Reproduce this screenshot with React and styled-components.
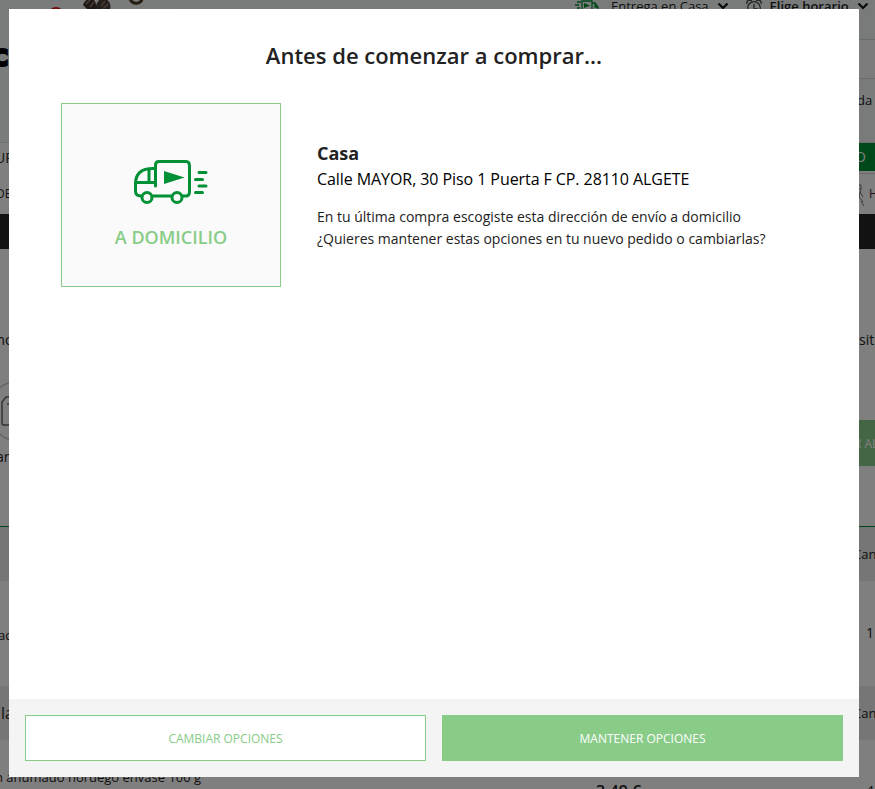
import React from "react";
import styled, { createGlobalStyle } from "styled-components";

const GlobalStyle = createGlobalStyle`
  * { box-sizing: border-box; }
  html, body { margin: 0; height: 100%; overflow: hidden; }
  body { font-family: "Open Sans", "Noto Sans", sans-serif; color: #222; background: #fff; }
`;

const Page = styled.div`
  width: 875px;
  height: 789px;
  overflow: hidden;
`;

const Header = styled.header`
  height: 142px;
  background: linear-gradient(90deg, #f4f7f7, #f3f7f6);
`;

const TopBar = styled.div`
  display: flex;
  align-items: flex-start;
  height: 39px;
  padding-left: 45px;
`;

const Decoration = styled.svg`
  display: block;
  flex: none;
  width: 110px;
  height: 12px;
  margin-right: 420px;
`;

const TopItem = styled.div`
  display: flex;
  align-items: center;
  flex: none;
  height: 12px;
  margin-left: ${(p) => p.$gap || 0}px;
  white-space: nowrap;
  font-size: 13px;
  font-weight: ${(p) => (p.$strong ? 600 : 400)};
  svg { flex: none; }
`;

const TopText = styled.span`
  margin: 0 ${(p) => p.$after || 8}px 0 ${(p) => p.$before || 9}px;
`;

const Row = styled.section`
  display: grid;
  grid-template-columns: 859px 16px;
  align-items: start;
  height: ${(p) => p.$height}px;
  background: ${(p) => p.$bg || "transparent"};
  border-top: ${(p) => (p.$line ? `1px solid ${p.$line}` : "0")};
  overflow: hidden;
`;

const SearchEdge = styled.div`
  width: 16px;
  height: 40px;
  border: solid #d0d6d6;
  border-width: 1px 0;
  background: #f8f8f8;
`;

const Label = styled.div`
  margin: ${(p) => p.$top || 0}px 0 0 ${(p) => p.$left || 0}px;
  font-size: ${(p) => p.$size || 14}px;
  font-weight: ${(p) => p.$weight || 400};
  line-height: 20px;
  color: ${(p) => p.$color || "#222"};
  white-space: nowrap;
`;

const Brand = styled(Label)`
  font-family: "DejaVu Sans", sans-serif;
  color: #000;
  -webkit-text-stroke: 2px #000;
`;

const GreenBlock = styled.div`
  display: flex;
  align-items: center;
  width: 60px;
  height: ${(p) => p.$height}px;
  margin-top: ${(p) => p.$top || 0}px;
  background: ${(p) => p.$bg};
`;

const Branch = styled.svg`
  display: block;
  flex: none;
  width: 16px;
  height: 38px;
`;

const NavRight = styled.div`
  display: flex;
  width: 30px;
  border-top: 1px solid #d0d0d0;
`;

const ListBadge = styled.svg`
  display: block;
  width: 80px;
  height: 60px;
  margin-top: 29px;
`;

const Overlay = styled.div`
  position: fixed;
  inset: 0;
  padding: 9px 0 0 9px;
  background: rgba(0, 0, 0, 0.5);
`;

const Dialog = styled.main`
  display: flex;
  flex-direction: column;
  width: 850px;
  height: 768px;
  background: #fff;
`;

const Title = styled.h1`
  margin: 30px 0 0;
  font-size: 22px;
  font-weight: 600;
  line-height: 32px;
  text-align: center;
  color: #222;
`;

const Content = styled.div`
  display: flex;
  flex: 1;
  align-items: flex-start;
  gap: 36px;
  padding: 32px 52px 0;
`;

const MethodCard = styled.div`
  display: flex;
  flex-direction: column;
  align-items: center;
  flex: none;
  width: 220px;
  height: 184px;
  padding-top: 53px;
  background: #fafafa;
  border: 1px solid #8c8;
`;

const MethodName = styled.div`
  margin-top: 21px;
  font-size: 18px;
  font-weight: 600;
  line-height: 24px;
  color: #8c8;
`;

const Details = styled.div`
  padding-top: 38px;
  white-space: nowrap;
`;

const Place = styled.h2`
  margin: 0;
  font-size: 18px;
  font-weight: 700;
  line-height: 25px;
`;

const Address = styled.p`
  margin: 0 0 14px;
  font-size: 16px;
  line-height: 26px;
  letter-spacing: -0.075px;
  color: #000;
`;

const Question = styled.p`
  margin: 0;
  font-size: 14px;
  line-height: 22px;
`;

const Footer = styled.footer`
  display: flex;
  gap: 16px;
  height: 78px;
  padding: 16px;
  background: #f4f4f4;
`;

const Button = styled.button`
  flex: 1;
  height: 46px;
  padding: 0;
  border: 1px solid #8c8;
  background: ${(p) => (p.$filled ? "#8c8" : "#fff")};
  color: ${(p) => (p.$filled ? "#fff" : "#8c8")};
  font: 400 12px "Open Sans", sans-serif;
`;

const Chevron = () => (
  <svg width="12" height="8" viewBox="0 0 12 8">
    <path d="M1.500 1.500 6 6l4.500-4.500" fill="none" stroke="#111" strokeWidth="2.200" />
  </svg>
);

const MiniTruck = () => (
  <svg width="24" height="12" viewBox="0 0 24 12" fill="none" stroke="#009035" strokeWidth="1.300">
    <path d="M7 12V1h10v11M17 3h3l3 4v5M2 2h4M0 5h4M2 8h3M20 3v4h3" />
    <path d="m9 3 6 2.500L9 8z" fill="#009035" stroke="none" />
  </svg>
);

const Alarm = () => (
  <svg width="16" height="17" viewBox="0 0 16 17" fill="none" stroke="#444" strokeWidth="1.300">
    <circle cx="8" cy="10" r="6.300" />
    <path d="M8 6v5h4M1 6c-1-3 2-5 5-3M15 6c1-3-2-5-5-3" />
  </svg>
);

const Truck = () => (
  <svg width="76" height="47" viewBox="0 0 76 47" fill="none" stroke="#009035" strokeWidth="3" strokeLinecap="round" strokeLinejoin="round">
    <path d="M22.500 29V8Q22.500 4.500 26 4.500H53Q56.500 4.500 56.500 9V34.500Q56.500 39 53 39H50M38 39H20M8 39Q2.500 39 2.500 34V26Q3 11.500 20 11.500H22" />
    <path d="M3 25.500H22M16 13V25" />
    <circle cx="14" cy="40.500" r="5" />
    <circle cx="44" cy="40.500" r="5" />
    <path d="m31 14 20.500 6.500L31 27z" fill="#009035" stroke="none" />
    <path d="M66 15.500H73M62.500 22.500H69.500M66 29H73M62.500 35.500H69.500" />
  </svg>
);

export default function App() {
  return (
    <>
      <GlobalStyle />
      <Page>
        <Header>
          <TopBar>
            <Decoration viewBox="0 0 110 12">
              <circle cx="11" cy="15" r="8" fill="#ed1522" />
              <path d="M38 5q2-6 7-6 7 0 6 10h-9z" fill="#40352f" />
              <path d="M51 9q-1-5 4-10h6q6 4 4 10z" fill="#4a403c" />
              <path d="m41 4 4-4m0 7 4-5m7 4 4-5m-2 8 5-5" stroke="#93796a" strokeWidth="1.500" />
              <path d="M85-1q2 5 8 4 4-1 4-5" fill="none" stroke="#4a3a22" strokeWidth="3" />
            </Decoration>
            <TopItem>
              <MiniTruck />
              <TopText $before={12}>Entrega en Casa</TopText>
              <Chevron />
            </TopItem>
            <TopItem $gap={17} $strong>
              <Alarm />
              <TopText $before={8}>Elige horario</TopText>
              <Chevron />
            </TopItem>
          </TopBar>
          <Row $height={40}>
            <Brand $size={30} $weight={700} $top={7} $left={-9}>c</Brand>
            <SearchEdge />
          </Row>
          <Row $height={63}>
            <span />
            <Label $top={11} $left={-2} $size={13}>da</Label>
          </Row>
        </Header>
        <Row $height={31} $line="#ddd">
          <Label $top={5} $left={-5}>UR</Label>
          <GreenBlock $height={28} $bg="#009035">
            <Label $left={-4} $color="#fff">O</Label>
          </GreenBlock>
        </Row>
        <Row $height={41}>
          <Label $top={11} $left={-4} $size={12}>DE</Label>
          <NavRight>
            <Branch viewBox="0 0 16 38" fill="none" stroke="#777" strokeWidth="1">
              <path d="M0 11h2v4H0M2 15l-2 8M1 18l3 5M0 23l4 5M2 27l3 5" />
            </Branch>
            <Label $top={10} $left={-6} $size={12} $color="#55202a">H</Label>
          </NavRight>
        </Row>
        <Row $height={35} $bg="#252525" />
        <Row $height={102}>
          <Label $top={81} $left={-8}>mo</Label>
          <Label $top={81}>sitio</Label>
        </Row>
        <Row $height={175}>
          <div>
            <ListBadge viewBox="0 0 80 60" fill="none" stroke="#666" strokeWidth="2">
              <circle cx="19" cy="31" r="30" stroke="#ccc" strokeWidth="1.500" />
              <path d="M2 44V22l4-5h16v28H3zM7 24h5v-5M9 28h1M9 33h1M9 38h1" strokeWidth="1.500" />
            </ListBadge>
            <Label $top={7} $left={-4}>ar</Label>
          </div>
          <GreenBlock $height={46} $bg="#8c8" $top={69}>
            <Label $left={-5} $top={1} $size={12} $color="#fff">R AL</Label>
          </GreenBlock>
        </Row>
        <Row $height={55} $bg="#ececec" $line="#009035">
          <span />
          <Label $top={17} $left={-6} $size={13}>Cantidad</Label>
        </Row>
        <Row $height={105}>
          <Label $top={44} $left={-2} $size={13}>ad</Label>
          <Label $top={42} $left={7}>1</Label>
        </Row>
        <Row $height={54} $bg="#ececec">
          <Label $top={17} $left={1} $size={16}>la</Label>
          <Label $top={17} $left={-6} $size={13}>Cantidad</Label>
        </Row>
        <Row $height={49}>
          <div>
            <Label $top={27} $left={-5} $size={13}>n ahumado noruego envase 100 g</Label>
            <Label $top={-6} $left={596} $size={16} $weight={600}>3,49 €</Label>
          </div>
          <Label $top={41} $left={7}>4</Label>
        </Row>
      </Page>
      <Overlay>
        <Dialog>
          <Title>Antes de comenzar a comprar...</Title>
          <Content>
            <MethodCard>
              <Truck />
              <MethodName>A DOMICILIO</MethodName>
            </MethodCard>
            <Details>
              <Place>Casa</Place>
              <Address>Calle MAYOR, 30 Piso 1 Puerta F CP. 28110 ALGETE</Address>
              <Question>En tu última compra escogiste esta dirección de envío a domicilio</Question>
              <Question>¿Quieres mantener estas opciones en tu nuevo pedido o cambiarlas?</Question>
            </Details>
          </Content>
          <Footer>
            <Button>CAMBIAR OPCIONES</Button>
            <Button $filled>MANTENER OPCIONES</Button>
          </Footer>
        </Dialog>
      </Overlay>
    </>
  );
}
